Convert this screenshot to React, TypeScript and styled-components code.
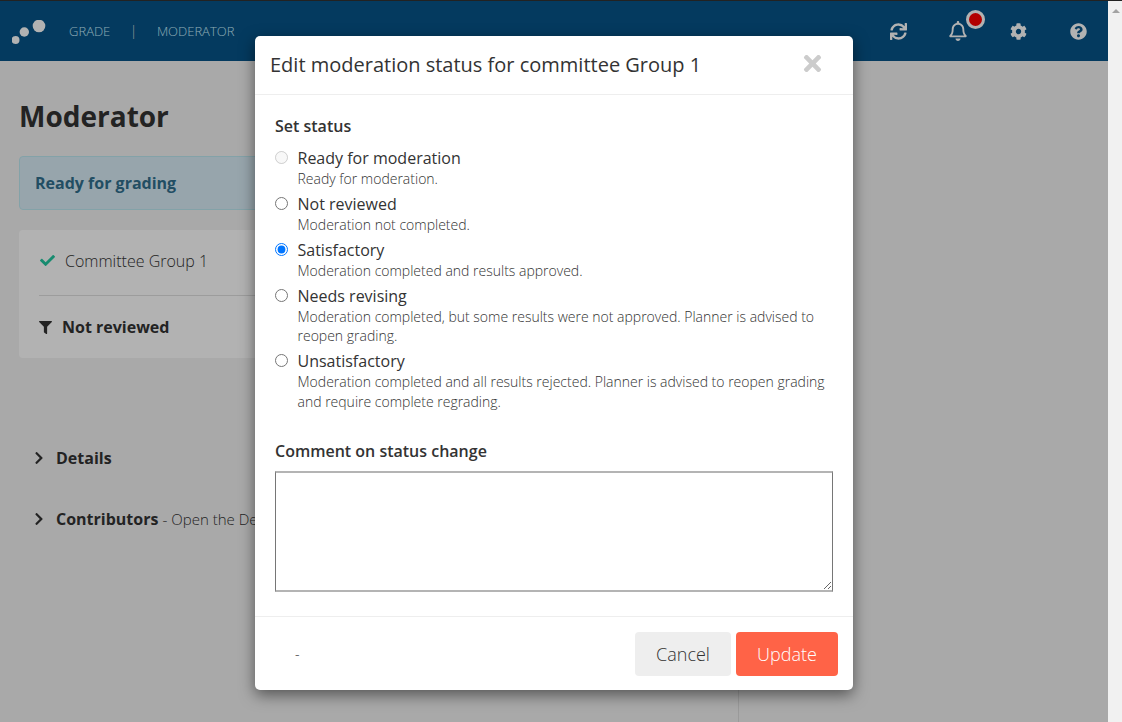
import React from "react";
import styled, { createGlobalStyle } from "styled-components";
import { FaSync, FaRegBell, FaCog, FaQuestionCircle, FaCheck, FaFilter, FaChevronRight, FaTimes } from "react-icons/fa";

const Global = createGlobalStyle`
  html, body { margin: 0; padding: 0; height: 100%; overflow: hidden; }
  body { font-family: "Open Sans", "Liberation Sans", sans-serif; color: #333; background: #f3f3f3; }
  * { box-sizing: border-box; }
`;

const Frame = styled.div`
  width: 1122px; height: 722px; display: flex; border-top: 1px solid #222; overflow: hidden;
`;
const Viewport = styled.div`
  position: relative; width: 1108px; height: 721px; overflow: hidden; background: #f3f3f3;
`;
const Scrollbar = styled.div`
  width: 14px; background: #f1f1f1; display: flex; justify-content: center; padding: 8px 0 0 2px;
`;
const ScrollUp = styled.div`
  width: 0; height: 0; border-left: 4px solid transparent; border-right: 4px solid transparent; border-bottom: 4px solid #a3a3a3;
`;
const Header = styled.header`
  height: 60px; background: #065388; display: flex; align-items: center; padding: 0 0 0 12px; color: #fff;
`;
const Logo = styled.svg`
  width: 34px; height: 28px; flex: none; margin-top: 6px;
`;
const NavItem = styled.span`
  font-size: 13px; font-weight: 300; color: #c8f0ff;
`;
const Nav = styled.nav`
  display: flex; align-items: center; margin-left: 23px; gap: 19.5px; margin-top: -1px;
`;
const NavSep = styled.span`
  font-size: 14px; font-weight: 300; color: #ddd;
`;
const Tools = styled.div`
  margin-left: auto; display: flex; align-items: center; color: #fff;
`;
const Tool = styled.span<{ $size?: number }>`
  position: relative; width: 60px; display: flex; justify-content: center; align-items: center; font-size: ${(p) => p.$size ?? 17}px; height: 20px;
`;
const Badge = styled.span`
  position: absolute; left: 38px; top: -11px; width: 19px; height: 19px; border-radius: 50%; background: #f00; border: 3px solid #fff;
`;
const Main = styled.main`
  display: flex; height: 661px;
`;
const Left = styled.section`
  width: 739px; height: 100%; padding: 0 19px; border-right: 1px solid #ddd;
`;
const Title = styled.h1`
  margin: 36px 0 21px; font-size: 28px; line-height: 38px; font-weight: 700; color: #333;
`;
const Alert = styled.div`
  height: 54px; display: flex; align-items: center; padding-left: 15px; border: 1px solid #bce8f1; border-radius: 4px;
  background: #d9edf7; color: #31708f; font-weight: 700; font-size: 16px;
`;
const Card = styled.div`
  margin-top: 20px; height: 128px; border-radius: 4px; background: #fff; padding: 0 20px;
`;
const CardRow = styled.div`
  height: 66px; padding: 0 0 4px 1px; display: flex; align-items: center; gap: 10px; font-size: 16px; font-weight: 300; border-bottom: 1px solid #e0e0e0;
  svg { color: #22c7a0; font-size: 15px; }
`;
const FilterRow = styled.div`
  height: 62px; display: flex; align-items: center; gap: 10px; font-size: 16px; font-weight: 700;
  svg { font-size: 13px; }
`;
const Section = styled.div<{ $top: number }>`
  margin-top: ${(p) => p.$top}px; padding-left: 13px; display: flex; align-items: center; gap: 10px; font-size: 16px; line-height: 22px; white-space: nowrap;
  svg { font-size: 14px; }
  b { font-weight: 700; }
  span { font-weight: 300; font-size: 15px; }
`;
const Backdrop = styled.div`
  position: absolute; inset: 0; background: rgba(0, 0, 0, 0.3);
`;
const Modal = styled.div`
  position: absolute; left: 255px; top: 35px; width: 598px; height: 654px; background: #fff; border-radius: 5px;
  box-shadow: 0 5px 15px rgba(0, 0, 0, 0.5); display: flex; flex-direction: column;
`;
const ModalHead = styled.div`
  height: 59px; flex: none; display: flex; align-items: center; justify-content: space-between; padding: 0 28px 0 15px; border-bottom: 1px solid #eee;
`;
const ModalTitle = styled.h2`
  margin: 0; font-size: 20px; font-weight: 400; line-height: 26px; color: #333;
`;
const Close = styled.span`
  color: #ccc; font-size: 25px; display: flex; margin-bottom: 4px;
`;
const ModalBody = styled.div`
  height: 522px; flex: none; padding: 20px 20px 0; border-bottom: 1px solid #eee;
`;
const Label = styled.div`
  font-size: 16px; font-weight: 600; line-height: 22px; color: #333;
`;
const RadioList = styled.div`
  margin-top: 9.5px; display: flex; flex-direction: column; gap: 4.5px;
`;
const RadioRow = styled.label`
  display: flex; gap: 9.5px;
`;
const Radio = styled.input`
  width: 13px; height: 13px; margin: 4px 0 0; flex: none;
`;
const RadioText = styled.div`
  display: flex; flex-direction: column;
`;
const RadioTitle = styled.span`
  font-size: 16px; line-height: 22px; font-weight: 400; color: #333;
`;
const RadioDesc = styled.span`
  font-size: 14px; line-height: 19.5px; font-weight: 300; color: #333;
`;
const CommentLabel = styled(Label)`
  margin-top: 29px;
`;
const Comment = styled.textarea`
  display: block; margin-top: 9px; width: 558px; height: 121px; border-style: solid; border-width: 2px 1px; border-color: #b4b4b4 #767676; outline: none; font: inherit; background: #fff;
`;
const ModalFoot = styled.div`
  flex: 1; display: flex; align-items: center; padding: 0 15px 0 40px; gap: 5px;
`;
const Dash = styled.span`
  margin-right: auto; font-size: 14px; font-weight: 300;
`;
const Button = styled.button<{ $primary?: boolean }>`
  height: 44px; border: none; border-radius: 4px; font-family: inherit; font-size: 18px; font-weight: 300; padding: 0;
  width: ${(p) => (p.$primary ? "102px" : "96px")};
  background: ${(p) => (p.$primary ? "#ff6347" : "#eee")};
  color: ${(p) => (p.$primary ? "#fff" : "#333")};
`;

const options = [
  { t: "Ready for moderation", d: "Ready for moderation.", disabled: true },
  { t: "Not reviewed", d: "Moderation not completed." },
  { t: "Satisfactory", d: "Moderation completed and results approved.", checked: true },
  { t: "Needs revising", d: "Moderation completed, but some results were not approved. Planner is advised to reopen grading." },
  { t: "Unsatisfactory", d: "Moderation completed and all results rejected. Planner is advised to reopen grading and require complete regrading." },
];

export default function App() {
  return (
    <Frame>
      <Global />
      <Viewport>
        <Header>
          <Logo viewBox="0 0 34 28">
            <circle cx="3.5" cy="20" r="4" fill="#fff" />
            <circle cx="12.3" cy="12" r="4.7" fill="#fff" />
            <circle cx="27" cy="6" r="6.3" fill="#fff" />
          </Logo>
          <Nav>
            <NavItem>GRADE</NavItem>
            <NavSep>|</NavSep>
            <NavItem>MODERATOR</NavItem>
          </Nav>
          <Tools>
            <Tool><FaSync /></Tool>
            <Tool $size={20}><FaRegBell /><Badge /></Tool>
            <Tool><FaCog /></Tool>
            <Tool><FaQuestionCircle /></Tool>
          </Tools>
        </Header>
        <Main>
          <Left>
            <Title>Moderator</Title>
            <Alert>Ready for grading</Alert>
            <Card>
              <CardRow><FaCheck />Committee Group 1</CardRow>
              <FilterRow><FaFilter />Not reviewed</FilterRow>
            </Card>
            <Section $top={89}><FaChevronRight /><b>Details</b></Section>
            <Section $top={39}><FaChevronRight /><div><b>Contributors</b> <span>- Open the Details section</span></div></Section>
          </Left>
        </Main>
        <Backdrop />
        <Modal>
          <ModalHead>
            <ModalTitle>Edit moderation status for committee Group 1</ModalTitle>
            <Close><FaTimes /></Close>
          </ModalHead>
          <ModalBody>
            <Label>Set status</Label>
            <RadioList>
              {options.map((o) => (
                <RadioRow key={o.t}>
                  <Radio type="radio" name="status" disabled={o.disabled} defaultChecked={o.checked} />
                  <RadioText>
                    <RadioTitle>{o.t}</RadioTitle>
                    <RadioDesc>{o.d}</RadioDesc>
                  </RadioText>
                </RadioRow>
              ))}
            </RadioList>
            <CommentLabel>Comment on status change</CommentLabel>
            <Comment />
          </ModalBody>
          <ModalFoot>
            <Dash>-</Dash>
            <Button>Cancel</Button>
            <Button $primary>Update</Button>
          </ModalFoot>
        </Modal>
      </Viewport>
      <Scrollbar><ScrollUp /></Scrollbar>
    </Frame>
  );
}
